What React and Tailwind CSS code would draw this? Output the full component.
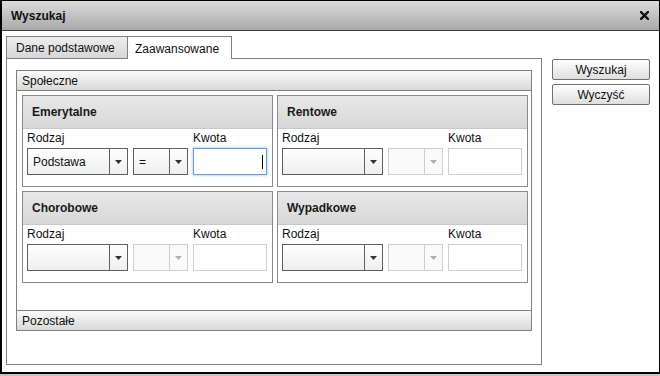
import React from "react";

const font = { fontFamily: '"Liberation Sans", Arial, sans-serif' };

const Arrow = ({ disabled }) => (
  <svg width="7" height="4" viewBox="0 0 7 4">
    <path d="M0 0 H7 L3.5 4 Z" fill={disabled ? "#b0b0b0" : "#333"} />
  </svg>
);

const Combo = ({ value, disabled, width, divider }) => (
  <div
    className={`flex h-[27px] border ${
      disabled ? "border-[#cfcfcf] bg-[#fafafa]" : "border-[#5f5f5f] bg-gradient-to-b from-white to-[#eeeeee]"
    } ${width}`}
  >
    <div className="flex-1 flex items-center pl-[5px] text-[12px] text-[#111]">{value}</div>
    <div
      className={`${divider} flex items-center justify-center border-l ${
        disabled ? "border-[#cfcfcf]" : "border-[#5f5f5f]"
      }`}
    >
      <Arrow disabled={disabled} />
    </div>
  </div>
);

const Group = ({ title, first, focused }) => (
  <div className="border border-[#8a8a8a] bg-white h-[92px]">
    <div className="h-[33px] border-b border-[#c8c8c8] bg-gradient-to-b from-[#e8e8e8] to-[#d8d8d8] flex items-center pl-[9px] font-bold text-[12px] text-[#1a1a1a]">
      {title}
    </div>
    <div className="pl-[4px] pt-[2px] grid grid-cols-[101px_55px_74px] gap-x-[5px]">
      <div className="text-[12px] leading-[14px] h-[14px] text-[#111]">Rodzaj</div>
      <div />
      <div className="text-[12px] leading-[14px] h-[14px] text-[#111]">Kwota</div>
      <div className="mt-[3px]">
        <Combo value={first ? "Podstawa" : ""} width="w-[101px]" divider="w-[18px]" />
      </div>
      <div className="mt-[3px]">
        <Combo value={first ? "=" : ""} disabled={!first} width="w-[55px]" divider="w-[18px]" />
      </div>
      <div className="mt-[3px]">
        {focused ? (
          <div className="h-[27px] border border-[#6f9bd1] shadow-[0_0_3px_#8dbcf3] bg-white flex items-center justify-end pr-[3px]">
            <div className="w-px h-[14px] bg-black" />
          </div>
        ) : (
          <div className="h-[27px] border border-[#cfcfcf] bg-white" />
        )}
      </div>
    </div>
  </div>
);

const Header = ({ children, className }) => (
  <div
    className={`h-[20px] bg-gradient-to-b from-[#fafafa] to-[#d9d9d9] flex items-center pl-[5px] text-[12px] text-[#111] ${className}`}
  >
    {children}
  </div>
);

const Button = ({ children }) => (
  <button className="h-[21px] w-[98px] border border-[#707070] rounded-[2px] bg-gradient-to-b from-white to-[#dedede] text-[12px] text-[#111] flex items-center justify-center">
    {children}
  </button>
);

export default function App() {
  return (
    <div className="w-[660px] h-[376px] bg-gradient-to-b from-[#9c9c9c] to-[#c4c4c4]" style={font}>
      <div className="h-[374px] border border-black border-l-2 border-b-2 bg-white flex flex-col">
        <div className="h-[30px] shrink-0 border-b border-[#3a3a3a] bg-gradient-to-b from-[#dcdcdc] to-[#a9a9a9] flex items-center justify-between pl-[9px] pr-[10px]">
          <span className="font-bold text-[12px] text-[#111]">Wyszukaj</span>
          <svg width="9" height="9" viewBox="0 0 9 9">
            <path d="M1 1 L8 8 M8 1 L1 8" stroke="#111" strokeWidth="2.4" strokeLinecap="square" />
          </svg>
        </div>
        <div className="flex pl-[4px] pt-[5px]">
          <div className="w-[536px] flex flex-col">
            <div className="flex h-[22px] relative z-10">
              <div className="w-[122px] border border-b-0 border-[#808080] bg-gradient-to-b from-[#eeeeee] to-[#d6d6d6] flex items-center pl-[9px] text-[12px] text-[#111]">
                Dane podstawowe
              </div>
              <div className="w-[104px] h-[23px] border-t border-r border-[#808080] bg-white flex items-center pl-[7px] pt-[2px] text-[12px] text-[#111]">
                Zaawansowane
              </div>
            </div>
            <div className="h-[307px] border border-[#808080] px-[9px] pt-[11px]">
              <div className="border border-[#808080]">
                <Header className="border-b border-[#808080]">Społeczne</Header>
                <div className="h-[219px] pt-[4px] pl-[5px] pr-[3px] grid grid-cols-2 gap-x-[4px] gap-y-[4px] content-start">
                  <Group title="Emerytalne" first focused />
                  <Group title="Rentowe" />
                  <Group title="Chorobowe" />
                  <Group title="Wypadkowe" />
                </div>
                <Header className="border-t border-[#808080]">Pozostałe</Header>
              </div>
            </div>
          </div>
          <div className="ml-[10px] mt-[23px] flex flex-col gap-[4px]">
            <Button>Wyszukaj</Button>
            <Button>Wyczyść</Button>
          </div>
        </div>
      </div>
    </div>
  );
}
